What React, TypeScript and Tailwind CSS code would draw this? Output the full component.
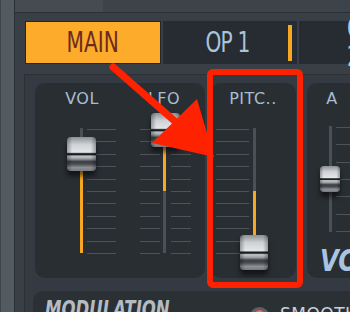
import React from 'react';

type Span = [number, number];

type FaderProps = {
    width: number;
    height: number;
    trackX: number;
    trackTop?: number;
    trackBottom?: number;
    handleX: number;
    handleTop: number;
    handleW: number;
    handleH: number;
    fill?: Span;
    ticks: number[];
    tickSpans: Span[];
};

const range = (n: number, start: number, step: number) =>
    Array.from({ length: n }, (_, i) => Math.round(start + i * step));

const Handle: React.FC<{ w: number; h: number }> = ({ w, h }) => (
    <div
        className="relative rounded-[4px] shadow-[0_5px_5px_rgba(0,0,0,0.55)] bg-[linear-gradient(to_bottom,#8c9094_0%,#cfd2d5_22%,#e3e5e7_45%,#1c1f23_49%,#1c1f23_52%,#c3c6c9_56%,#9da1a5_64%,#3d4147_72%,#464a50_79%,#8d9196_90%,#767a7f_100%)]"
        style={{ width: w, height: h }}
    >
        <div className="absolute inset-0 rounded-[4px] bg-[linear-gradient(to_right,rgba(0,0,0,0.3)_0%,rgba(0,0,0,0)_18%,rgba(0,0,0,0)_82%,rgba(0,0,0,0.3)_100%)]" />
    </div>
);

const Fader: React.FC<FaderProps> = ({
    width, height, trackX, trackTop = 0, trackBottom, handleX, handleTop, handleW, handleH, fill, ticks, tickSpans,
}) => (
    <div className="relative shrink-0" style={{ width, height }}>
        {/* tick marks */}
        {ticks.map((y) =>
            tickSpans.map(([a, b]) => (
                <div key={`${y}-${a}`} className="absolute h-px bg-[#4d5359]" style={{ top: y, left: a, width: b - a }} />
            ))
        )}
        {/* track */}
        <div
            className="absolute w-[3px] bg-[#4a5056]"
            style={{ left: trackX, top: trackTop, height: (trackBottom ?? height) - trackTop }}
        />
        {fill && (
            <div className="absolute w-[3px] bg-[#f7a823]" style={{ left: trackX, top: fill[0], height: fill[1] - fill[0] }} />
        )}
        <div className="absolute" style={{ left: handleX, top: handleTop }}>
            <Handle w={handleW} h={handleH} />
        </div>
    </div>
);

const labelFont = "font-['DejaVu_Sans',sans-serif] text-[16px] leading-[19px] tracking-[0.5px] text-[#a7bdd1]";
const tabFont = "font-['DejaVu_Sans_Condensed','DejaVu_Sans',sans-serif] font-stretch-condensed text-[28px] leading-none";
const bigItalic = "font-['DejaVu_Sans_Condensed','DejaVu_Sans',sans-serif] font-stretch-condensed italic font-bold";

const bigTicks = range(11, 1, 12.4);

const App: React.FC = () => {
    return (
        <div className="relative w-[350px] h-[312px] overflow-hidden flex bg-[#393f46]">
            {/* left strip */}
            <div className="w-[15px] shrink-0 bg-[#525b62] border-l border-l-[#3e454b] border-r border-r-[#2b3035]" />

            <div className="flex-1 flex flex-col min-w-0">
                {/* top bar */}
                <div className="h-[13px] shrink-0 flex border-b border-[#2a2f34]">
                    <div className="w-[88px] bg-[#444b52]" />
                    <div className="flex-1 bg-[#3c434a]" />
                </div>

                {/* tabs */}
                <div className="mt-[8px] ml-[10px] flex gap-[2px] h-[43px] shrink-0">
                    <div className="w-[136px] shrink-0 bg-[#fdab2a] border border-[#22272c] flex items-center justify-center">
                        <span className={`${tabFont} inline-block scale-x-80 text-[#6d2a1e]`}>MAIN</span>
                    </div>
                    <div className="relative w-[134px] shrink-0 bg-[#262c32] flex items-center justify-center pr-[4px]">
                        <span className={`${tabFont} inline-block scale-x-80 tracking-[-1px] text-[#a9c3da]`}>OP 1</span>
                        <div className="absolute right-[5px] top-[4px] bottom-[3px] w-[4px] bg-[#f7a823]" />
                    </div>
                    <div className="w-[80px] shrink-0 bg-[#262c32] flex items-center pl-[48px]">
                        <span className={`${tabFont} inline-block origin-left scale-x-80 text-[#a9c3da]`}>OP 2</span>
                    </div>
                </div>

                {/* inner frame */}
                <div className="mt-[10px] ml-[9px] flex-1 bg-[#343a41] border-l border-t border-[#2c3136] pt-[8px] pl-[8px] flex flex-col">
                    <div className="h-[195px] shrink-0 flex pl-[2px]">
                        {/* VOL / LFO */}
                        <div className="w-[170px] shrink-0 rounded-[10px] bg-[#292e33] pt-[6px] pl-[11px]">
                            <div className="flex gap-[10px]">
                                <div className={`w-[72px] text-center ${labelFont}`}>VOL</div>
                                <div className={`w-[72px] text-center ${labelFont}`}>LFO</div>
                            </div>
                            <div className="mt-[20px] flex gap-[10px]">
                                <Fader
                                    width={72} height={125} trackX={34} handleX={21} handleTop={9} handleW={29} handleH={34}
                                    fill={[43, 125]} ticks={bigTicks} tickSpans={[[41, 70]]}
                                />
                                <Fader
                                    width={72} height={125} trackX={35} handleX={23} handleTop={-15} handleW={29} handleH={34}
                                    fill={[19, 63]} ticks={bigTicks} tickSpans={[[12, 32], [43, 63]]}
                                />
                            </div>
                        </div>

                        {/* PITCH */}
                        <div className="ml-[5px] w-[86px] shrink-0 rounded-[10px] bg-[#292e33] pt-[6px]">
                            <div className={`text-center ${labelFont}`}>PITC..</div>
                            <div className="mt-[20px]">
                                <Fader
                                    width={86} height={125} trackX={43} handleX={30} handleTop={107} handleW={28} handleH={35}
                                    fill={[63, 107]} ticks={bigTicks} tickSpans={[[6, 39]]}
                                />
                            </div>
                        </div>

                        {/* A */}
                        <div className="ml-[11px] w-[60px] shrink-0 rounded-[10px] bg-[#292e33] pt-[6px] flex flex-col">
                            <div className={`w-[50px] text-center ${labelFont}`}>A</div>
                            <div className="mt-[20px]">
                                <Fader
                                    width={50} height={104} trackX={22} trackTop={-2} handleX={13} handleTop={38} handleW={20} handleH={26}
                                    ticks={range(7, -1, 17.3)} tickSpans={[[29, 52]]}
                                />
                            </div>
                            <div className={`mt-[14px] ml-[13px] text-[30px] leading-[30px] inline-block origin-left scale-x-90 text-[#a8c4e0] ${bigItalic}`}>VOL</div>
                        </div>
                    </div>

                    {/* modulation */}
                    <div className="mt-[13px] flex-1 rounded-tl-[10px] bg-[#2b3035] pl-[12px] pt-[5px] flex items-start">
                        <div className="w-[205px] shrink-0">
                            <span className={`inline-block origin-left scale-x-80 text-[23px] leading-[26px] text-[#b3bbc3] ${bigItalic}`}>MODULATION</span>
                        </div>
                        <div className="mt-[11px] w-[19px] h-[19px] shrink-0 rounded-full bg-[#5a6168] flex items-center justify-center">
                            <div className="w-[13px] h-[13px] rounded-full bg-[radial-gradient(circle_at_50%_30%,#ff9a7a_0%,#f0431f_45%,#b4200c_100%)]" />
                        </div>
                        <span className="ml-[11px] mt-[8px] font-['DejaVu_Sans',sans-serif] text-[17px] leading-[20px] tracking-[0.5px] text-[#c9d2db]">SMOOTH</span>
                    </div>
                </div>
            </div>

            {/* annotation overlay */}
            <svg className="absolute inset-0 pointer-events-none" width="350" height="312" viewBox="0 0 350 312">
                <rect x="210" y="72" width="90" height="213" rx="3" fill="none" stroke="#ff2200" strokeWidth="6" />
                <line x1="113" y1="67" x2="178" y2="124" stroke="#ff2200" strokeWidth="7" strokeLinecap="round" />
                <polygon points="197,99 152,143 214,157" fill="#ff2200" />
            </svg>
        </div>
    );
};

export default App;
